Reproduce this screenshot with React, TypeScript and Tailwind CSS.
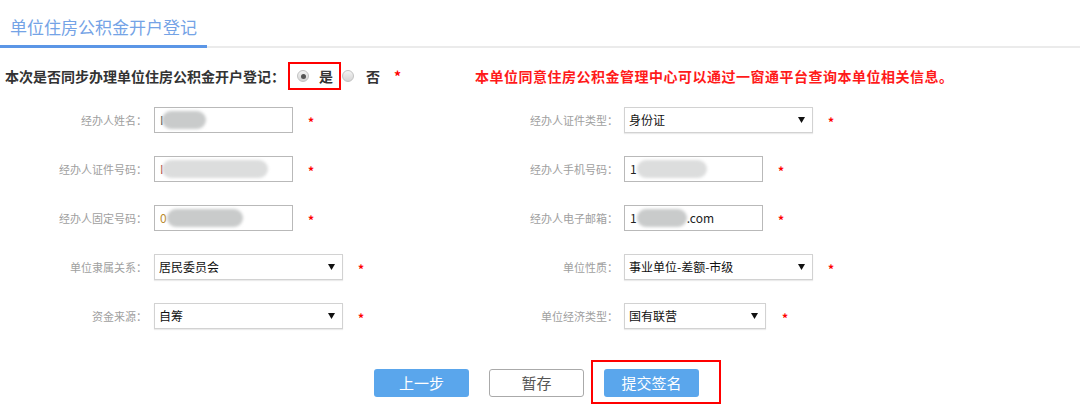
import React from "react";

const font = { fontFamily: '"Noto Sans CJK SC", "Noto Sans", sans-serif' };

function Star() {
  return <span className="text-[#ff0000] text-[12px] font-bold leading-none">*</span>;
}

function Blur({ w, dark = false }: { w: number; dark?: boolean }) {
  return (
    <span
      className={`inline-block h-[18px] rounded-full blur-[1.5px] ${dark ? "bg-[#c9cbcb]" : "bg-[#dcdddd]"}`}
      style={{ width: w }}
    />
  );
}

function Radio({ checked }: { checked?: boolean }) {
  return (
    <span className="inline-flex h-[12px] w-[12px] items-center justify-center rounded-full border border-[#c2c2c2] bg-gradient-to-b from-[#f4f4f4] to-[#d4d4d4]">
      {checked && <span className="h-[5px] w-[5px] rounded-full bg-[#555]" />}
    </span>
  );
}

function Arrow() {
  return (
    <svg width="7" height="6" viewBox="0 0 7 6">
      <path d="M0 0 H7 L3.5 6 Z" fill="#111" />
    </svg>
  );
}

function TextBox({ width, children }: { width: number; children?: React.ReactNode }) {
  return (
    <div
      className="flex h-[26px] items-center overflow-hidden border border-[#b9b9b9] bg-white pl-[5px] text-[12px] text-[#222]"
      style={{ width }}
    >
      {children}
    </div>
  );
}

function SelectBox({ width, value }: { width: number; value: string }) {
  return (
    <div
      className="flex h-[26px] items-center justify-between border border-[#d2d2d2] bg-white pl-[4px] pr-[7px] text-[12px] text-[#111] shadow-[0_1px_1px_rgba(0,0,0,0.08)]"
      style={{ width }}
    >
      <span>{value}</span>
      <Arrow />
    </div>
  );
}

function Field({
  label,
  labelWidth,
  gap,
  children,
  starGap,
}: {
  label: string;
  labelWidth: number;
  gap: number;
  children: React.ReactNode;
  starGap: number;
}) {
  return (
    <div className="flex h-[26px] items-center">
      <div className="text-right text-[11px] text-[#a0a0a0]" style={{ width: labelWidth, marginRight: gap }}>
        {label}
      </div>
      {children}
      <span style={{ marginLeft: starGap }}>
        <Star />
      </span>
    </div>
  );
}

export default function App() {
  return (
    <div className="h-[416px] w-[1080px] overflow-hidden bg-white" style={font}>
      {/* Header */}
      <div className="pl-[10px] pt-[15px] text-[17px] leading-[24px] text-[#74a3e6]">单位住房公积金开户登记</div>
      <div className="mt-[6px] flex h-[3px] items-end">
        <div className="h-[3px] w-[207px] bg-[#5b96e6]" />
        <div className="h-[2px] flex-1 bg-[#ebebeb]" />
      </div>

      {/* Question */}
      <div className="mt-[14px] flex h-[28px] items-center text-[14px] font-bold text-[#333]">
        <span className="ml-[5px]">本次是否同步办理单位住房公积金开户登记：</span>
        <div className="ml-[3px] flex h-[28px] w-[53px] items-center border-2 border-[#ff0000] pl-[7px]">
          <Radio checked />
          <span className="ml-[10px]">是</span>
        </div>
        <span className="ml-[1px] flex items-center">
          <Radio />
        </span>
        <span className="ml-[12px]">否</span>
        <span className="ml-[14px] text-[#ff0000]">*</span>
        <span className="ml-[74px] tracking-[0.5px] text-[#ff1a1a]">本单位同意住房公积金管理中心可以通过一窗通平台查询本单位相关信息。</span>
      </div>

      {/* Form */}
      <div className="mt-[17px] flex">
        <div className="flex w-[470px] flex-col gap-[23px]">
          <Field label="经办人姓名：" labelWidth={147} gap={7} starGap={15}>
            <TextBox width={139}>
              <span className="mr-[-2px] text-[#444]">I</span>
              <Blur w={44} dark />
            </TextBox>
          </Field>
          <Field label="经办人证件号码：" labelWidth={147} gap={7} starGap={15}>
            <TextBox width={139}>
              <span className="mr-[-2px] text-[#a33]">I</span>
              <Blur w={106} />
            </TextBox>
          </Field>
          <Field label="经办人固定号码：" labelWidth={147} gap={7} starGap={15}>
            <TextBox width={139}>
              <span className="text-[#b98a2c]">0</span>
              <Blur w={76} dark />
            </TextBox>
          </Field>
          <Field label="单位隶属关系：" labelWidth={147} gap={7} starGap={15}>
            <SelectBox width={189} value="居民委员会" />
          </Field>
          <Field label="资金来源：" labelWidth={147} gap={7} starGap={15}>
            <SelectBox width={189} value="自筹" />
          </Field>
        </div>
        <div className="flex flex-col gap-[23px]">
          <Field label="经办人证件类型：" labelWidth={148} gap={6} starGap={15}>
            <SelectBox width={189} value="身份证" />
          </Field>
          <Field label="经办人手机号码：" labelWidth={148} gap={6} starGap={15}>
            <TextBox width={139}>
              <span>1</span>
              <Blur w={70} />
            </TextBox>
          </Field>
          <Field label="经办人电子邮箱：" labelWidth={148} gap={6} starGap={15}>
            <TextBox width={139}>
              <span>1</span>
              <Blur w={50} dark />
              <span>.com</span>
            </TextBox>
          </Field>
          <Field label="单位性质：" labelWidth={148} gap={6} starGap={15}>
            <SelectBox width={189} value="事业单位-差额-市级" />
          </Field>
          <Field label="单位经济类型：" labelWidth={148} gap={6} starGap={16}>
            <SelectBox width={142} value="国有联营" />
          </Field>
        </div>
      </div>

      {/* Buttons */}
      <div className="mt-[40px] flex items-center pl-[374px] text-[15px]">
        <button className="h-[28px] w-[95px] rounded-[3px] bg-[#5aa6ec] text-white">上一步</button>
        <button className="ml-[20px] h-[28px] w-[95px] rounded-[3px] border border-[#aaa] bg-white text-[#555]">暂存</button>
        <div className="relative ml-[20px]">
          <button className="h-[28px] w-[95px] rounded-[3px] bg-[#5aa6ec] text-white">提交签名</button>
          <div className="pointer-events-none absolute left-[-13px] top-[-9px] h-[44px] w-[130px] border-2 border-[#ff0000]" />
        </div>
      </div>
    </div>
  );
}
